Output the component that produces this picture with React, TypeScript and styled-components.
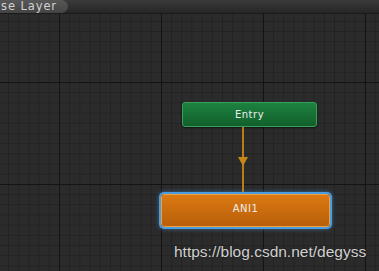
import React from "react";
import styled, { createGlobalStyle } from "styled-components";

const GlobalStyle = createGlobalStyle`
  html, body {
    margin: 0;
    padding: 0;
    background: #2a2a2a;
    overflow: hidden;
  }
  #root {
    width: 379px;
    height: 271px;
  }
`;

const Graph = styled.div`
  position: relative;
  width: 379px;
  height: 271px;
  overflow: hidden;
  background-color: #2b2b2b;
  background-image:
    linear-gradient(to right, #141414 1px, transparent 1px),
    linear-gradient(to bottom, #141414 1px, transparent 1px),
    linear-gradient(to right, #232323 1px, transparent 1px),
    linear-gradient(to bottom, #232323 1px, transparent 1px);
  background-size: 102px 102px, 102px 102px, 10.2px 10.2px, 10.2px 10.2px;
  background-position: 59px 0, 0 82px, 59px 0, 0 82px;
  font-family: "DejaVu Sans", sans-serif;
`;

const TopBar = styled.div`
  position: absolute;
  left: 0;
  top: 0;
  right: 0;
  height: 13px;
  display: flex;
  align-items: stretch;
  background: linear-gradient(#3a3a3a, #262626);
  border-bottom: 1px solid #1a1a1a;
`;

const LayerTab = styled.div`
  display: flex;
  align-items: center;
  padding: 0 11px 0 1px;
  background: linear-gradient(#575757, #444444);
  border-radius: 0 8px 8px 0;
  color: #d2d2d2;
  font-size: 11.5px;
  letter-spacing: 0.9px;
  line-height: 13px;
`;

const StateNode = styled.div<{ $x: number; $y: number; $w: number; $h: number; $kind: "entry" | "default" }>`
  position: absolute;
  left: ${(p) => p.$x}px;
  top: ${(p) => p.$y}px;
  width: ${(p) => p.$w}px;
  height: ${(p) => p.$h}px;
  box-sizing: border-box;
  display: flex;
  align-items: center;
  justify-content: center;
  padding-bottom: ${(p) => (p.$kind === "entry" ? 1 : 4)}px;
  border-radius: 3px;
  color: #eeeeee;
  font-size: 10px;
  letter-spacing: 0.5px;
  background: ${(p) =>
    p.$kind === "entry"
      ? "linear-gradient(#1d8240, #125f2b)"
      : "linear-gradient(#dc7a12, #b85f0a)"};
  border: 1px solid ${(p) => (p.$kind === "entry" ? "#36a05a" : "#eea040")};
  box-shadow: ${(p) =>
    p.$kind === "entry"
      ? "0 1px 2px rgba(0,0,0,0.6)"
      : "0 0 0 2px #4a9de0, 0 0 4px 2px rgba(80,160,230,0.55)"};
`;

const Transition = styled.svg`
  position: absolute;
  left: 236px;
  top: 127px;
`;

const Watermark = styled.div`
  position: absolute;
  left: 174px;
  top: 243px;
  color: #d0d0d0;
  font-family: "Liberation Sans", Arial, sans-serif;
  font-size: 15.5px;
  text-shadow: 0 0 2px rgba(0, 0, 0, 0.5);
`;

export default function App() {
  return (
    <>
      <GlobalStyle />
      <Graph>
        <TopBar>
          <LayerTab>se Layer</LayerTab>
        </TopBar>
        <StateNode $x={182} $y={102} $w={135} $h={25} $kind="entry">
          Entry
        </StateNode>
        <Transition width="14" height="67" viewBox="0 0 14 67">
          <line x1="7" y1="0" x2="7" y2="67" stroke="#b97c16" strokeWidth="2" />
          <polygon points="2,30 12,30 7,39" fill="#c8861a" />
        </Transition>
        <StateNode $x={161} $y={194} $w={169} $h={33} $kind="default">
          ANI1
        </StateNode>
        <Watermark>https://blog.csdn.net/degyss</Watermark>
      </Graph>
    </>
  );
}
